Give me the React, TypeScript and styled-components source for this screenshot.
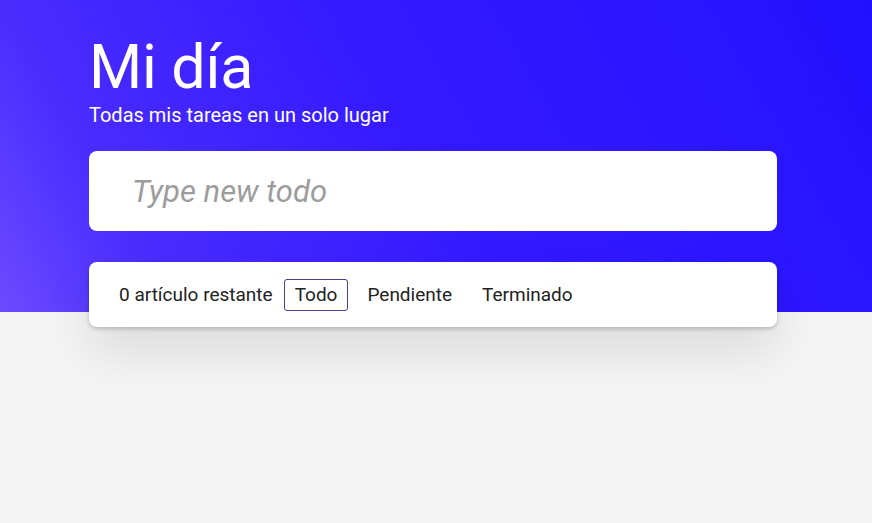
import React, { useState } from "react";
import styled, { createGlobalStyle } from "styled-components";

const Global = createGlobalStyle`
  html, body { margin: 0; padding: 0; }
  body {
    font-family: Roboto, "Liberation Sans", sans-serif;
    background: #f4f4f4;
  }
`;

const Page = styled.div`
  min-height: 523px;
  background:
    linear-gradient(60deg, #6b4bff 0%, #4a2cff 17%, #3419ff 50%, #2915ff 83%, #2010ff 100%) top left / 100% 312px no-repeat,
    #f4f4f4;
  padding-top: 31px;
  box-sizing: border-box;
`;

const Container = styled.div`
  width: 688px;
  margin-left: 89px;
  display: flex;
  flex-direction: column;
`;

const Title = styled.h1`
  margin: 0;
  font-size: 61px;
  font-weight: 400;
  line-height: 72px;
  color: #fff;
  letter-spacing: -0.3px;
`;

const Subtitle = styled.p`
  margin: 0;
  font-size: 20px;
  line-height: 24px;
  color: #fff;
`;

const InputCard = styled.div`
  margin-top: 24px;
  height: 80px;
  background: #fff;
  border-radius: 8px;
  display: flex;
  align-items: center;
  padding-left: 43px;
  box-sizing: border-box;
`;

const TodoInput = styled.input`
  border: none;
  outline: none;
  width: 100%;
  font-family: Roboto, "Liberation Sans", sans-serif;
  font-size: 31px;
  font-style: italic;
  color: #333;
  background: transparent;
  padding: 0;
  &::placeholder {
    color: #9c9c9c;
    font-style: italic;
  }
`;

const FilterCard = styled.div`
  margin-top: 31px;
  height: 65px;
  background: #fff;
  border-radius: 8px;
  display: flex;
  align-items: center;
  padding-left: 30px;
  box-sizing: border-box;
  box-shadow: 0 2px 4px rgba(0, 0, 0, 0.2), 0 25px 50px rgba(0, 0, 0, 0.1);
  gap: 8px;
`;

const Count = styled.span`
  font-size: 19px;
  color: #222;
  margin-right: 3px;
`;

const FilterButton = styled.button<{ $active?: boolean }>`
  font-family: Roboto, "Liberation Sans", sans-serif;
  font-size: 19px;
  color: #222;
  background: transparent;
  height: 32px;
  padding: 0 10px;
  border-radius: 3px;
  border: 1px solid ${(p) => (p.$active ? "#4b3d8f" : "transparent")};
  cursor: pointer;
`;

export default function App() {
  const [filter, setFilter] = useState("Todo");
  return (
    <>
      <Global />
      <Page>
        <Container>
          <Title>Mi día</Title>
          <Subtitle>Todas mis tareas en un solo lugar</Subtitle>
          <InputCard>
            <TodoInput placeholder="Type new todo" />
          </InputCard>
          <FilterCard>
            <Count>0 artículo restante</Count>
            {["Todo", "Pendiente", "Terminado"].map((f) => (
              <FilterButton key={f} $active={filter === f} onClick={() => setFilter(f)}>
                {f}
              </FilterButton>
            ))}
          </FilterCard>
        </Container>
      </Page>
    </>
  );
}
